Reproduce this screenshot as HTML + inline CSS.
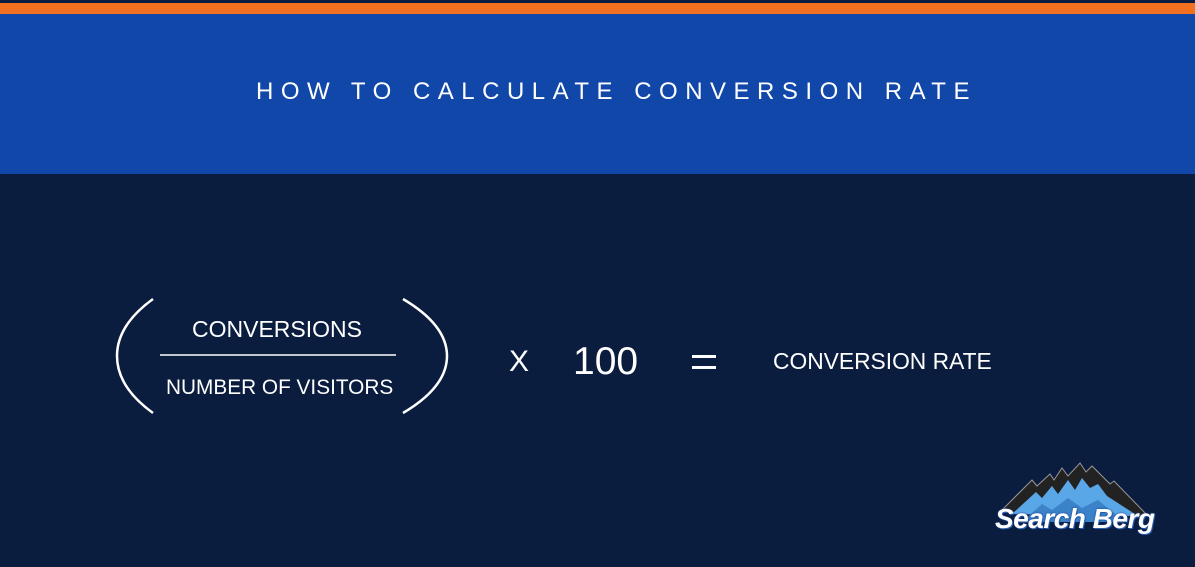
<!DOCTYPE html>
<html><head><style>
html,body{margin:0;padding:0}
body{width:1195px;height:567px;background:#0b1d3f;position:relative;overflow:hidden;font-family:"Liberation Sans",sans-serif;color:#fff}
.or{position:absolute;left:0;top:3px;width:1195px;height:11px;background:#f37021}
.bl{position:absolute;left:0;top:14px;width:1195px;height:160px;background:#1047a9}
.t{position:absolute;white-space:nowrap;line-height:1}
</style></head><body>
<div class="or"></div><div class="bl"></div>
<div class="t" style="left:256px;top:80px;font-size:24px;letter-spacing:7.5px">HOW TO CALCULATE CONVERSION RATE</div>
<svg style="position:absolute;left:0;top:0" width="1195" height="567">
<path d="M153 299 Q117 325 117 356 Q117 387 153 413" fill="none" stroke="#fff" stroke-width="2.5"/>
<path d="M403 299 Q447 325 447 356 Q447 387 403 413" fill="none" stroke="#fff" stroke-width="2.5"/>
<line x1="160" y1="355" x2="396" y2="355" stroke="#fff" stroke-width="1.5"/>
<rect x="692" y="355" width="24" height="3" fill="#fff"/>
<rect x="692" y="366" width="24" height="3" fill="#fff"/>
<g transform="translate(980,450)">
<path d="M20 62 L52 30 L57 36 L70 24 L74 30 L82 18 L88 26 L100 13 L106 22 L112 16 L130 34 L134 31 L168 66 Z" fill="#222" stroke="#999" stroke-width="1"/>
<path d="M32 64 L56 42 L62 48 L72 36 L78 44 L88 30 L95 40 L102 28 L110 38 L118 34 L127 46 L158 66 Z" fill="#5aa7e8"/>
<path d="M42 72 L62 54 L72 60 L88 48 L102 58 L118 50 L145 72 Z" fill="#3b82c9"/>
</g>
</svg>
<div class="t" style="left:192px;top:318px;font-size:23px">CONVERSIONS</div>
<div class="t" style="left:166px;top:378px;font-size:20.8px">NUMBER OF VISITORS</div>
<div class="t" style="left:509px;top:347px;font-size:30px">X</div>
<div class="t" style="left:573px;top:342px;font-size:39px">100</div>
<div class="t" style="left:773px;top:350px;font-size:22.8px">CONVERSION RATE</div>
<div class="t" style="left:995px;top:505px;font-size:28px;font-weight:bold;font-style:italic;letter-spacing:-0.5px;text-shadow:0 0 2px #1b3a8a,1px 1px 0 #2d6fc0">Search Berg</div>
</body></html>
